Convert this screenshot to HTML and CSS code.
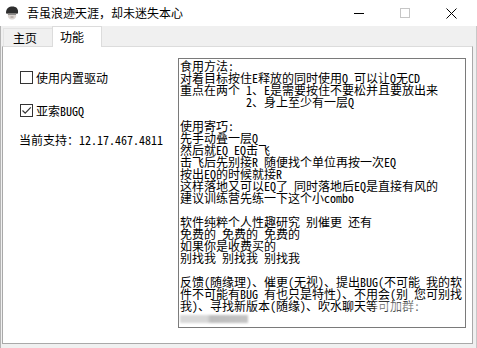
FILE: index.html
```html
<!DOCTYPE html>
<html lang="zh-CN">
<head>
    <meta charset="UTF-8">
    <title>吾虽浪迹天涯，却未迷失本心</title>
    <link rel="stylesheet" href="styles.css">
</head>
<body>
    <div class="window">
        <!-- Title bar -->
        <div class="titlebar">
            <svg class="app-icon" width="14" height="14" viewBox="0 0 14 14">
                <path d="M1 7 C1 2 4 0.5 7.5 0.5 C11 0.5 13.5 2.5 13 7 L12 8 L2 8 Z" fill="#2e2e2e"/>
                <path d="M2.5 7 L11.5 7 L11 11 C10 13 8.5 13.5 7 13.5 C5.5 13.5 4 13 3 11 Z" fill="#ddd6d2"/>
                <path d="M3 7.3 L11 7.3 L11 8.6 L3 8.6 Z" fill="#5a5a5a"/>
                <path d="M5.5 11 L8.5 11" stroke="#8a7f7a" stroke-width="0.8"/>
            </svg>
            <span class="title">吾虽浪迹天涯，却未迷失本心</span>
            <div class="win-buttons">
                <span class="win-btn">
                    <svg width="10" height="10" viewBox="0 0 10 10"><path d="M0 5.5 H10" stroke="#000" stroke-width="1"/></svg>
                </span>
                <span class="win-btn">
                    <svg width="10" height="10" viewBox="0 0 10 10"><rect x="0.5" y="0.5" width="9" height="9" fill="none" stroke="#c6c6c6" stroke-width="1"/></svg>
                </span>
                <span class="win-btn">
                    <svg width="11" height="11" viewBox="0 0 11 11"><path d="M0.5 0.5 L10.5 10.5 M10.5 0.5 L0.5 10.5" stroke="#000" stroke-width="1"/></svg>
                </span>
            </div>
        </div>

        <div class="client">
            <!-- Tabs -->
            <div class="tabs">
                <span class="tab">主页</span>
                <span class="tab active">功能</span>
            </div>

            <div class="panel">
                <div class="options">
                    <label class="check-row">
                        <span class="box"></span>
                        <span>使用内置驱动</span>
                    </label>
                    <label class="check-row second">
                        <span class="box">
                            <svg width="11" height="11" viewBox="0 0 11 11"><path d="M1.5 5.5 L4.2 8.2 L9.8 2.4" fill="none" stroke="#333" stroke-width="1.2"/></svg>
                        </span>
                        <span class="half">亚索BUGQ</span>
                    </label>
                    <div class="version half">当前支持：12.17.467.4811</div>
                </div>

                <div class="memo">
                    <div class="ln">食用方法:</div>
                    <div class="ln">对着目标按住E释放的同时使用Q 可以让Q无CD</div>
                    <div class="ln">重点在两个 1、E是需要按住不要松并且要放出来</div>
                    <div class="ln indent">2、身上至少有一层Q</div>
                    <div class="ln"></div>
                    <div class="ln">使用寄巧:</div>
                    <div class="ln">先手动叠一层Q</div>
                    <div class="ln">然后就EQ EQ击飞</div>
                    <div class="ln">击飞后先别接R 随便找个单位再按一次EQ</div>
                    <div class="ln">按出EQ的时候就接R</div>
                    <div class="ln">这样落地又可以EQ了 同时落地后EQ是直接有风的</div>
                    <div class="ln">建议训练营先练一下这个小combo</div>
                    <div class="ln"></div>
                    <div class="ln">软件纯粹个人性趣研究 别催更 还有</div>
                    <div class="ln">免费的 免费的 免费的</div>
                    <div class="ln">如果你是收费买的</div>
                    <div class="ln">别找我 别找我 别找我</div>
                    <div class="ln"></div>
                    <div class="ln">反馈(随缘理)、催更(无视)、提出BUG(不可能 我的软</div>
                    <div class="ln">件不可能有BUG 有也只是特性)、不用会(别 您可别找</div>
                    <div class="ln">我)、寻找新版本(随缘)、吹水聊天等可加群:</div>
                    <div class="ln"><span class="blurred"></span></div>
                    <div class="smudge"></div>
                </div>
            </div>
        </div>
    </div>
</body>
</html>
```

FILE: styles.css
```css
/*Base*/
body {
    margin: 0;
    width: 477px;
    height: 348px;
    overflow: hidden;
    background: #f0f0f0;
    font-family: "Noto Sans CJK SC", sans-serif;
    font-size: 12px;
    color: #000;
}

.window {
    height: 348px;
    display: flex;
    flex-direction: column;
}

/* Title bar */
.titlebar {
    height: 26px;
    background: #fff;
    display: flex;
    align-items: center;
}

.app-icon {
    margin-left: 5px;
    flex: none;
}

.title {
    margin-left: 8px;
    line-height: 14px;
}

.win-buttons {
    margin-left: auto;
    margin-right: 3px;
    display: flex;
}

.win-btn {
    width: 46px;
    height: 26px;
    display: flex;
    align-items: center;
    justify-content: center;
}

/* Client area */
.client {
    flex: 1;
    display: flex;
    flex-direction: column;
    padding: 0 3px 4px 1px;
    border-left: 1px solid #b4b4b4;
    border-right: 1px solid #c8c8c8;
}

.tabs {
    height: 20px;
    display: flex;
    align-items: flex-end;
    padding-left: 1px;
    position: relative;
    z-index: 1;
}

.tab {
    width: 50px;
    height: 18px;
    line-height: 18px;
    box-sizing: border-box;
    padding-left: 9px;
    border: 1px solid #e3e3e3;
    border-bottom: none;
}

.tab.active {
    height: 21px;
    line-height: 20px;
    background: #fff;
    border-color: #dcdcdc;
    padding-left: 7px;
    margin-bottom: -1px;
    margin-left: -1px;
}

.panel {
    flex: 1;
    background: #fff;
    border: 1px solid #a9a9a9;
    border-top-color: #dcdcdc;
    display: flex;
    padding: 11px 6px 15px 17px;
}

/* Left column */
.options {
    width: 158px;
    flex: none;
    padding-top: 12px;
}

.check-row {
    display: flex;
    align-items: center;
    height: 14px;
    gap: 3px;
}

.check-row.second {
    margin-top: 19px;
}

.box {
    width: 11px;
    height: 11px;
    border: 1px solid #333;
    background: #fff;
    display: flex;
}

.half {
    font-feature-settings: "hwid";
}

.version {
    margin-top: 16px;
    margin-left: -1px;
    height: 14px;
    line-height: 14px;
}

/* Text box */
.memo {
    width: 288px;
    height: 270px;
    box-sizing: border-box;
    border: 1px solid #7a7a7a;
    padding: 1px 1px;
    position: relative;
    font-feature-settings: "hwid";
}

.ln {
    height: 12px;
    line-height: 12px;
    white-space: pre;
}

.indent {
    padding-left: 66px;
}

.blurred {
    display: inline-block;
    width: 68px;
    height: 8px;
    margin-top: 3px;
    background: linear-gradient(90deg, #d8d8d8 0%, #d8d8d8 40%, #bdbdbd 45%, #c4c4c4 100%);
    filter: blur(1.2px);
}

.smudge {
    position: absolute;
    left: 196px;
    top: 243px;
    width: 48px;
    height: 9px;
    background: rgba(255, 255, 255, 0.55);
    filter: blur(1.5px);
}
```
